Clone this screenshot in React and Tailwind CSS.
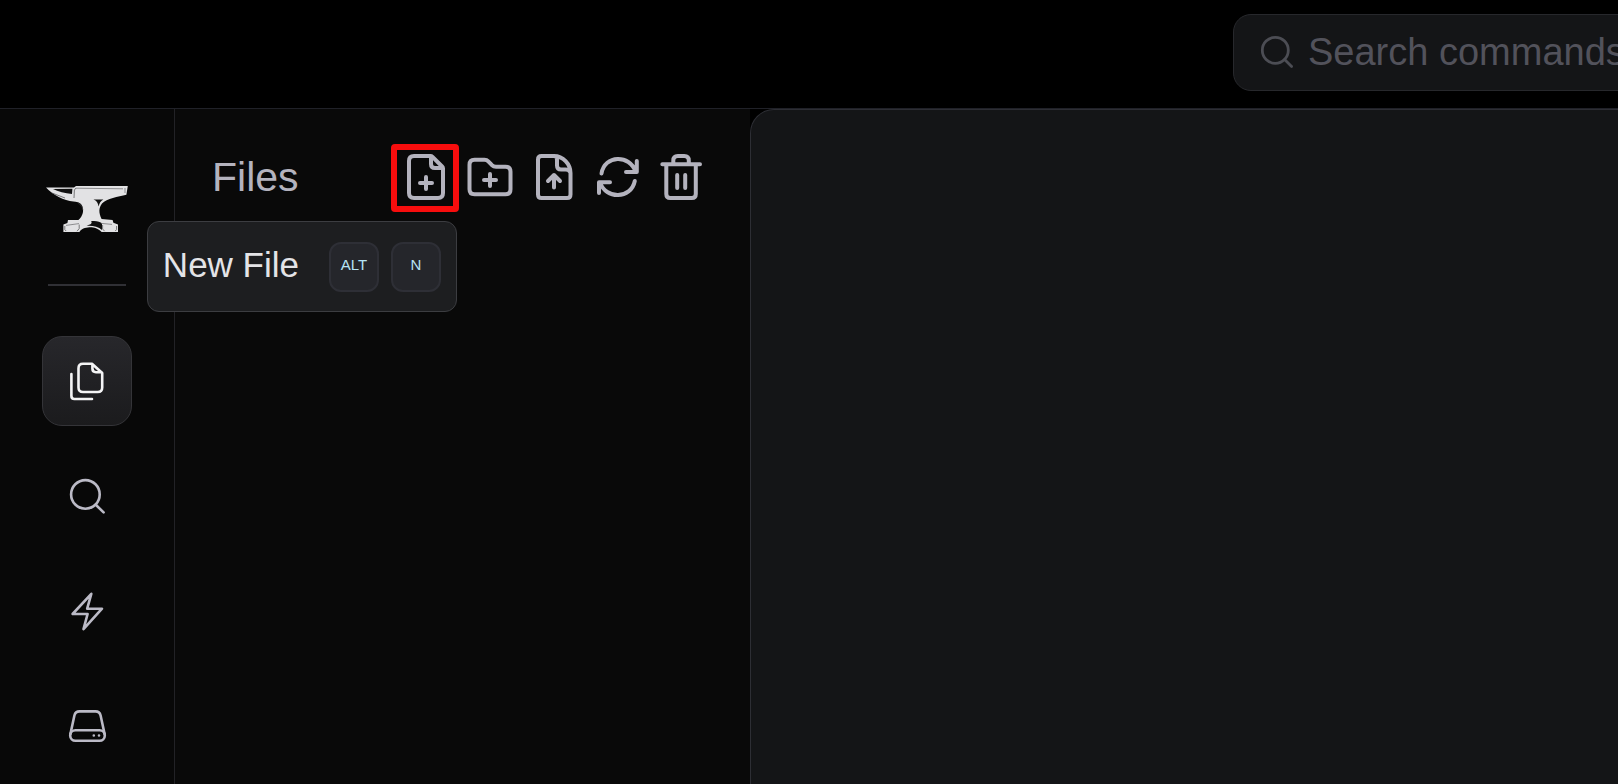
import React from "react";

function Anvil() {
  return (
    <svg viewBox="0 0 84 48" className="h-12 w-[84px]" aria-hidden="true">
      <path
        fill="#e2e2e4"
        d="M1 2.6 29 2.4 31 1H82.8L81.4 9.8C73 11.6 62 13.6 57 18.6C53.6 23 53.6 28 56.6 34L67.6 35 68.4 37.8 73 39.4V47H56.6C53 42.9 48 42 44.5 42.2C40 42.4 36 44 34.4 47H18.4V39.4L22.4 38 23 35 33.4 35C38 31 39.4 25 36.8 20C35 17.5 31 16.8 28.4 16.6C19 15.5 8 10.5 1 2.6Z"
      />
      <path fill="#101010" d="M8 4 27.4 3.8 27 9C20 8.2 13 6.8 8 4ZM48.5 14.6 58.4 14.4C55.6 16 54.4 18 53.6 21.4C53 18 51.6 15.8 48.5 14.6ZM46 36.3C50 35.4 55.4 36.4 57 38.6V45C53 41.6 48 40.4 41.6 40.8C45 39.6 48 38.6 46 36.3Z" />
      <path fill="none" stroke="#77777a" strokeWidth="0.8" d="M31 3.2 78 3.8M80 3V8M56.4 38.4 67 39.4M21 40.4 34 38.6" />
      <path fill="none" stroke="#4a4a4c" strokeWidth="0.7" d="M7 8 20 13M29 13 29.4 5 31 3M33 17.6 37.2 21.6 37.8 25M19.8 41V44.6L21.2 46M71.6 41V44.6L70.2 46M57.6 40V44L59.6 46.2M34.2 39.6V43.6L32 46.2" />
    </svg>
  );
}

function ToolIcon({ children }) {
  return (
    <svg viewBox="0 0 64 64" className="size-16" fill="none" stroke="#b4b3be" strokeWidth="4" strokeLinecap="round" strokeLinejoin="round" aria-hidden="true">
      {children}
    </svg>
  );
}

function NavIcon({ children }) {
  return (
    <svg viewBox="0 0 48 48" className="size-12" fill="none" stroke="currentColor" strokeWidth="2.6" strokeLinecap="round" strokeLinejoin="round" aria-hidden="true">
      {children}
    </svg>
  );
}

const tools = [
  {
    label: "New File",
    icon: <path d="M21 10H37.4Q38.6 10 39.5 10.9L49.1 20.5Q50 21.4 50 22.6V47Q50 52 45 52H21Q16 52 16 47V15Q16 10 21 10ZM38 10.5V18Q38 22 42 22H49.5M33 31V43M27 37H39" />,
  },
  {
    label: "New Folder",
    icon: <path d="M17.5 13.7H27.5Q29.8 13.7 31.3 15.3L35 19.2Q36.6 20.7 39 20.7H48.5Q53.5 20.7 53.5 25.7V43.3Q53.5 48.3 48.5 48.3H17.5Q12.5 48.3 12.5 43.3V18.7Q12.5 13.7 17.5 13.7ZM33 28V40M27 34H39" />,
  },
  {
    label: "Upload File",
    icon: <path d="M20.5 10H33C42 10 49.5 18 49.5 27V48.5Q49.5 52 46 52H20.5Q17 52 17 48.5V13.5Q17 10 20.5 10ZM34 10.2Q36 11 36 14V19.5Q36 23.5 40 23.5H44.5Q48 23.5 49 26M33 41.5V29M27 35 33 29 39 35" />,
  },
  {
    label: "Refresh",
    icon: <path d="M16.5 27.5C19.5 8.5 45 8.5 50.5 25.5M51.8 15V26H41M49.8 35C46 53.5 20.5 53.5 15.2 36.5M14 47V36.3H25" />,
  },
  {
    label: "Delete",
    icon: <path d="M13.3 18.3H51M17.3 18.5V48Q17.3 52 21.3 52H42.8Q46.8 52 46.8 48V18.5M24.3 18V14.5Q24.3 10 28.8 10H35.3Q39.8 10 39.8 14.5V18M28.2 29V42M36.2 29V42" />,
  },
];

const nav = [
  {
    label: "Files",
    active: true,
    icon: <path d="M20 6.8H29L39.2 16V30.5Q39.2 35 34.7 35H20Q15.5 35 15.5 30.5V11.3Q15.5 6.8 20 6.8ZM29.4 7.2V11.6Q29.4 15.2 33 15.2H38.6M8.4 17V39Q8.4 42 11.4 42H29" />,
  },
  {
    label: "Search",
    icon: (
      <>
        <circle cx="22.4" cy="22.4" r="14.3" />
        <path d="m33 33 7.6 7.4" />
      </>
    ),
  },
  {
    label: "Actions",
    icon: <path d="M28.3 6.8 9.6 27H24.6L20.5 42.2 39 21.7H24.2Z" />,
  },
  {
    label: "Storage",
    icon: (
      <>
        <path d="M7.4 32 11.4 13.5Q12.4 9.4 16.5 9.4H32.5Q36.6 9.4 37.6 13.5L41.6 32" />
        <rect x="7.2" y="28.2" width="34.6" height="10.6" rx="5.3" />
        <path d="M30.8 33.5h.01M36 33.5h.01" />
      </>
    ),
  },
];

function Key({ children }) {
  return (
    <kbd className="flex size-[50px] items-center justify-center rounded-xl border-2 border-[#2e2f36] bg-[#25262b] pb-0.5 font-['Liberation_Sans',sans-serif] text-[15px] text-[#b5e3f5]">
      {children}
    </kbd>
  );
}

export default function App() {
  return (
    <div className="flex h-screen flex-col overflow-hidden bg-black font-['Liberation_Sans',Arial,sans-serif]">
      <header className="flex shrink-0 justify-end overflow-hidden border-b border-[#202128] pt-3.5 pb-[17px]">
        <label className="-mr-[300px] flex h-[77px] w-[685px] shrink-0 items-center rounded-[18px] border border-[#27282c] bg-[#141517] pl-6">
          <svg viewBox="0 0 40 40" className="size-10 shrink-0" fill="none" stroke="#4c4d54" strokeWidth="2.8" strokeLinecap="round" aria-hidden="true">
            <circle cx="17.3" cy="17.3" r="13" />
            <path d="m26.6 26.6 7 7" />
          </svg>
          <input
            type="text"
            aria-label="Search commands"
            placeholder="Search commands"
            className="ml-2.5 h-12 min-w-0 flex-1 bg-transparent text-[38px] text-[#d4d4d8] outline-none placeholder:text-[#52525b]"
          />
        </label>
      </header>

      <div className="flex min-h-0 flex-1">
        <aside className="flex w-[175px] shrink-0 flex-col items-center overflow-hidden border-r border-[#222226] bg-[#080808] pt-[76px]">
          <Anvil />
          <hr className="mt-[51px] w-[78px] shrink-0 border-t-2 border-[#303035]" />
          <nav className="mt-[50px] flex flex-col gap-[25px]">
            {nav.map((item) => (
              <button
                key={item.label}
                type="button"
                aria-label={item.label}
                className={
                  item.active
                    ? "flex size-[90px] items-center justify-center rounded-[20px] border border-[#343438] bg-linear-to-b from-[#27272b] to-[#1b1b1d] text-[#f4f4f5]"
                    : "flex size-[90px] items-center justify-center text-[#bbbac6]"
                }
              >
                <NavIcon>{item.icon}</NavIcon>
              </button>
            ))}
          </nav>
        </aside>

        <section className="w-[575px] shrink-0 bg-[#090909]">
          <div className="flex items-center justify-between pt-[37px] pr-[37px] pl-[37px]">
            <h2 className="pb-0.5 text-[41px] leading-[60px] text-[#b4b3be]">Files</h2>
            <div className="flex">
              {tools.map((tool, i) => (
                <div key={tool.label} className="relative">
                  <button
                    type="button"
                    aria-label={tool.label}
                    className={i === 0 ? "block rounded-xs outline-6 -outline-offset-4 outline-[#f70d0d]" : "block"}
                  >
                    <ToolIcon>{tool.icon}</ToolIcon>
                  </button>
                  {i === 0 && (
                    <div role="tooltip" className="absolute top-[75px] right-0 z-10 flex h-[91px] items-center rounded-xl border border-[#3c3d41] bg-[#1d1e20] px-[15px]">
                      <span className="pb-1 text-[35px] leading-10 whitespace-nowrap text-[#e4e4e7]">New File</span>
                      <span className="ml-[30px] flex gap-3">
                        <Key>ALT</Key>
                        <Key>N</Key>
                      </span>
                    </div>
                  )}
                </div>
              ))}
            </div>
          </div>
        </section>

        <main className="min-w-0 flex-1 rounded-tl-3xl border-t border-l border-[#2d2e34] bg-[#141517]" />
      </div>
    </div>
  );
}
